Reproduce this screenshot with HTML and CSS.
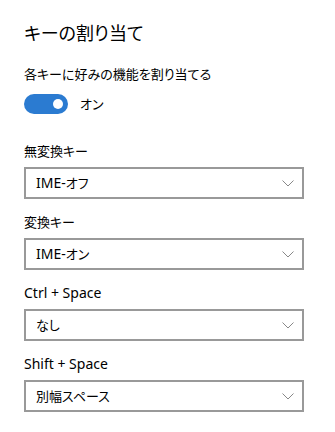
FILE: index.html
```html
<!DOCTYPE html>
<html lang="ja">
<head>
  <meta charset="utf-8">
  <title>キーの割り当て</title>
  <link rel="stylesheet" href="styles.css">
</head>
<body>

  <h1 class="title">キーの割り当て</h1>

  <p class="desc">各キーに好みの機能を割り当てる</p>
  <div class="toggle-row">
    <span class="toggle"><span class="knob"></span></span>
    <span class="toggle-label">オン</span>
  </div>

  <div class="fields">
    <div class="field">
      <label class="label">無変換キー</label>
      <div class="select">
        <span class="value"><span class="en">IME-</span>オフ</span>
        <svg class="chevron" width="12" height="7" viewBox="0 0 12 7"><path d="M0.5 0.5 L6 6 L11.5 0.5" fill="none" stroke="#888" stroke-width="1"/></svg>
      </div>
    </div>

    <div class="field">
      <label class="label">変換キー</label>
      <div class="select">
        <span class="value"><span class="en">IME-</span>オン</span>
        <svg class="chevron" width="12" height="7" viewBox="0 0 12 7"><path d="M0.5 0.5 L6 6 L11.5 0.5" fill="none" stroke="#888" stroke-width="1"/></svg>
      </div>
    </div>

    <div class="field">
      <label class="label en">Ctrl + Space</label>
      <div class="select">
        <span class="value">なし</span>
        <svg class="chevron" width="12" height="7" viewBox="0 0 12 7"><path d="M0.5 0.5 L6 6 L11.5 0.5" fill="none" stroke="#888" stroke-width="1"/></svg>
      </div>
    </div>

    <div class="field">
      <label class="label en">Shift + Space</label>
      <div class="select">
        <span class="value">別幅スペース</span>
        <svg class="chevron" width="12" height="7" viewBox="0 0 12 7"><path d="M0.5 0.5 L6 6 L11.5 0.5" fill="none" stroke="#888" stroke-width="1"/></svg>
      </div>
    </div>
  </div>

</body>
</html>
```

FILE: styles.css
```css
body {
  margin: 0;
  padding: 0 31px 0 24px;
  background: #fff;
  color: #000;
  font-family: "Noto Sans", "Noto Sans CJK JP", sans-serif;
  font-feature-settings: "palt";
  font-size: 13px;
  line-height: 20px;
}

.en {
  font-size: 14px;
}

.title {
  margin: 19px 0 0;
  font-size: 18px;
  font-weight: normal;
  line-height: 28px;
}

.desc {
  margin: 17px 0 0;
}

.toggle-row {
  display: flex;
  align-items: center;
  gap: 12px;
  margin-top: 10px;
}

.toggle {
  display: flex;
  align-items: center;
  justify-content: flex-end;
  width: 44px;
  height: 20px;
  padding: 0 5px;
  box-sizing: border-box;
  border-radius: 10px;
  background: #2b7bd1;
}

.knob {
  width: 10px;
  height: 10px;
  border-radius: 50%;
  background: #fff;
}

.fields {
  display: flex;
  flex-direction: column;
  gap: 13px;
  margin-top: 27px;
}

.label {
  display: block;
  margin-bottom: 6px;
}

.select {
  display: flex;
  align-items: center;
  justify-content: space-between;
  height: 32px;
  padding: 0 8px 0 10px;
  box-sizing: border-box;
  border: 2px solid #999;
}

.chevron {
  display: block;
}
```
